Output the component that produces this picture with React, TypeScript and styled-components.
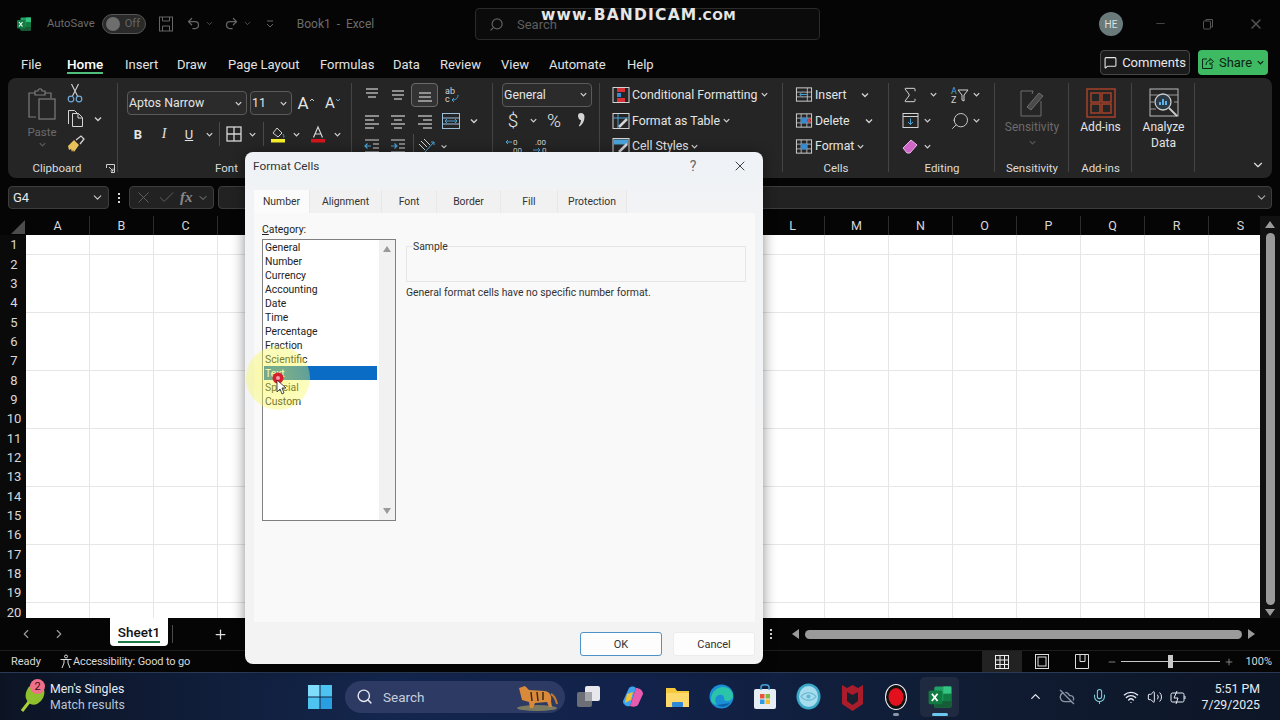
import React from "react";
import styled, { createGlobalStyle } from "styled-components";
import {
  Undo2, Redo2, Search, Sigma, ChevronDown, ChevronLeft, ChevronRight, ChevronUp,
  Plus, X, Check, MessageSquare, Mic, Wifi, Volume2, CloudOff, Minus,
} from "lucide-react";

const GlobalStyle = createGlobalStyle`
  html, body { margin: 0; padding: 0; background: #050505; }
  body { font-family: Roboto, "Liberation Sans", sans-serif; overflow: hidden; }
`;

const Page = styled.div`
  position: relative;
  width: 1280px;
  height: 720px;
  overflow: hidden;
  display: flex;
  flex-direction: column;
  background: #050505;
  color: #e8e8e8;
`;

/* title bar */
const TitleBar = styled.div`
  height: 47px;
  display: flex;
  align-items: center;
  padding-left: 16px;
  color: #6c6c6c;
`;
const Dim = styled.span<{ $ml?: number; $size?: number }>`
  margin-left: ${(p) => p.$ml ?? 0}px;
  font-size: ${(p) => p.$size ?? 12}px;
  color: #6c6c6c;
  white-space: nowrap;
`;
const Toggle = styled.div`
  margin-left: 7px;
  width: 44px;
  height: 20px;
  box-sizing: border-box;
  border: 1px solid #555;
  border-radius: 10px;
  background: #2a2a2a;
  display: flex;
  align-items: center;
  padding-left: 3px;
  gap: 5px;
  font-size: 11px;
  color: #666;
  &::before {
    content: "";
    width: 14px;
    height: 14px;
    border-radius: 50%;
    background: #6e6e6e;
  }
`;
const Slot = styled.span<{ $w: number; $ml?: number }>`
  flex: none;
  width: ${(p) => p.$w}px;
  margin-left: ${(p) => p.$ml ?? 0}px;
  display: inline-flex;
  align-items: center;
  justify-content: center;
`;
const SearchBox = styled.div`
  position: absolute;
  left: 475px;
  top: 8px;
  width: 345px;
  height: 32px;
  box-sizing: border-box;
  border: 1px solid #2b2b2b;
  border-radius: 4px;
  background: #0b0b0b;
  display: flex;
  align-items: center;
  padding-left: 13px;
  gap: 13px;
  font-size: 13px;
  color: #5e5e5e;
`;
const MirrorSearch = styled(Search)`
  transform: scaleX(-1);
`;
const Watermark = styled.div`
  position: absolute;
  left: 541px;
  top: 6px;
  font-family: "DejaVu Sans", sans-serif;
  font-weight: 700;
  font-size: 15.5px;
  letter-spacing: 1.2px;
  color: #e6e6e6;
  white-space: nowrap;
  small { font-size: 12.5px; letter-spacing: 0.4px; }
`;
const Avatar = styled.div`
  position: absolute;
  left: 1099px;
  top: 12px;
  width: 24px;
  height: 24px;
  border-radius: 50%;
  background: #6a7a7a;
  color: #d8e0e0;
  font-size: 10px;
  display: flex;
  align-items: center;
  justify-content: center;
`;
const WinButtons = styled.div`
  margin-left: auto;
  display: flex;
  align-items: center;
`;

/* menu row */
const MenuRow = styled.div`
  height: 31px;
  display: flex;
  align-items: center;
  font-size: 13px;
  color: #e2e2e2;
  padding-left: 21px;
`;
const MenuItem = styled.span<{ $w: number }>`
  flex: none;
  width: ${(p) => p.$w}px;
  margin-top: 3px;
  white-space: nowrap;
`;
const MenuText = styled.span<{ $active?: boolean }>`
  position: relative;
  display: inline-block;
  font-weight: ${(p) => (p.$active ? 500 : 400)};
  font-size: ${(p) => (p.$active ? 13.5 : 13)}px;
  color: ${(p) => (p.$active ? "#fff" : "#e2e2e2")};
  ${(p) =>
    p.$active &&
    `&::after {
      content: "";
      position: absolute;
      left: 0;
      right: 0;
      bottom: -2px;
      height: 2px;
      background: #4fc17a;
    }`}
`;
const CommentsBtn = styled.div`
  margin-left: auto;
  width: 90px;
  height: 25px;
  box-sizing: border-box;
  border: 1px solid #484848;
  border-radius: 4px;
  background: #1b1b1b;
  display: flex;
  align-items: center;
  justify-content: center;
  gap: 5px;
  color: #e8e8e8;
`;
const ShareBtn = styled.div`
  margin: 0 12px 0 8px;
  width: 70px;
  height: 25px;
  border-radius: 4px;
  background: #3dba62;
  color: #0d2414;
  display: flex;
  align-items: center;
  justify-content: center;
  gap: 4px;
`;

/* ribbon */
const Ribbon = styled.div`
  height: 100px;
  margin: 0 8px;
  border-radius: 8px;
  background: #252525;
  display: flex;
  color: #e4e4e4;
  font-size: 12.3px;
`;
const Group = styled.div<{ $w: number }>`
  position: relative;
  flex: none;
  width: ${(p) => p.$w}px;
  display: flex;
  flex-direction: column;
  &::after {
    content: "";
    position: absolute;
    right: 0;
    top: 5px;
    bottom: 6px;
    width: 1px;
    background: #444;
  }
`;
const GroupBody = styled.div<{ $pl?: number; $pt?: number; $gap?: number; $center?: boolean }>`
  height: 81px;
  box-sizing: border-box;
  padding: ${(p) => p.$pt ?? 4}px 0 0 ${(p) => p.$pl ?? 0}px;
  display: flex;
  flex-direction: column;
  gap: ${(p) => p.$gap ?? 0}px;
  ${(p) => p.$center && "align-items: center; text-align: center;"}
`;
const GroupLabel = styled.div<{ $shift?: number }>`
  height: 19px;
  line-height: 19px;
  text-align: center;
  font-size: 11.5px;
  color: #dcdcdc;
  padding-right: ${(p) => p.$shift ?? 0}px;
`;
const Launcher = styled.span`
  position: absolute;
  right: 3px;
  bottom: 5px;
  display: flex;
`;
const Row = styled.div<{ $h?: number }>`
  height: ${(p) => p.$h ?? 26}px;
  display: flex;
  align-items: center;
`;
const Select = styled.div<{ $w: number; $ml?: number }>`
  width: ${(p) => p.$w}px;
  margin-left: ${(p) => p.$ml ?? 0}px;
  height: 24px;
  box-sizing: border-box;
  border: 1px solid #5a5a5a;
  border-radius: 4px;
  background: #2b2b2b;
  padding: 0 3px 0 1px;
  display: flex;
  align-items: center;
  justify-content: space-between;
  font-size: 12.3px;
`;
const FontChar = styled.span<{ $size?: number; $weight?: number; $italic?: boolean; $under?: boolean; $serif?: boolean }>`
  font-size: ${(p) => p.$size ?? 13}px;
  font-weight: ${(p) => p.$weight ?? 400};
  font-style: ${(p) => (p.$italic ? "italic" : "normal")};
  text-decoration: ${(p) => (p.$under ? "underline" : "none")};
  font-family: ${(p) => (p.$serif ? '"Liberation Serif", serif' : "inherit")};
`;
const VBar = styled.span<{ $ml?: number; $h?: number }>`
  flex: none;
  width: 1px;
  height: ${(p) => p.$h ?? 24}px;
  margin-left: ${(p) => p.$ml ?? 0}px;
  background: #4a4a4a;
`;
const Active = styled(Slot)`
  height: 24px;
  box-sizing: border-box;
  border: 1px solid #6a6a6a;
  border-radius: 4px;
  background: #333;
`;
const Lbl = styled.span<{ $w?: number; $ml?: number }>`
  ${(p) => p.$w && `width: ${p.$w}px;`}
  margin-left: ${(p) => p.$ml ?? 2}px;
  white-space: nowrap;
`;
const BigIcon = styled.div`
  height: 32px;
  margin-top: 6px;
  display: flex;
  align-items: center;
  justify-content: center;
`;
const BigText = styled.div<{ $dim?: boolean }>`
  font-size: 12px;
  line-height: 16px;
  color: ${(p) => (p.$dim ? "#6b6b6b" : "#e4e4e4")};
`;
const Collapse = styled.div`
  margin: auto 7px 6px auto;
  display: flex;
`;

/* formula bar */
const FormulaRow = styled.div`
  height: 23px;
  margin: 8px 8px 0;
  display: flex;
  align-items: stretch;
`;
const NameBox = styled.div`
  width: 101px;
  box-sizing: border-box;
  border: 1px solid #3d3d3d;
  border-radius: 4px;
  background: #222;
  display: flex;
  align-items: center;
  justify-content: space-between;
  padding: 0 4px;
  font-size: 13px;
`;
const Dots = styled.div<{ $w: number }>`
  width: ${(p) => p.$w}px;
  display: flex;
  flex-direction: column;
  align-items: center;
  justify-content: center;
  gap: 2px;
  span {
    width: 2px;
    height: 2px;
    background: #d8d8d8;
  }
`;
const FxBox = styled.div`
  width: 85px;
  box-sizing: border-box;
  border: 1px solid #3d3d3d;
  border-radius: 4px;
  background: #222;
  display: flex;
  align-items: center;
  color: #888;
  padding-left: 4px;
  gap: 4px;
`;
const FormulaInput = styled.div`
  flex: 1;
  margin-left: 4px;
  box-sizing: border-box;
  border: 1px solid #3d3d3d;
  border-radius: 4px;
  background: #222;
  display: flex;
  align-items: center;
  justify-content: flex-end;
  padding-right: 3px;
`;

/* sheet */
const SheetArea = styled.div`
  margin-top: 7px;
  height: 402px;
  display: flex;
`;
const GridWrap = styled.div`
  width: 1260px;
  overflow: hidden;
`;
const COLS = "26px repeat(6, 64px) 95px repeat(12, 64px)";
const HeadRow = styled.div`
  height: 19px;
  display: grid;
  grid-template-columns: ${COLS};
`;
const ColHead = styled.div`
  border-right: 1px solid #2c2c2c;
  display: flex;
  align-items: center;
  justify-content: center;
  font-size: 12.5px;
  color: #d8d8d8;
`;
const Corner = styled.div`
  position: relative;
  &::after {
    content: "";
    position: absolute;
    right: 1px;
    bottom: 1px;
    border-style: solid;
    border-width: 0 0 14px 14px;
    border-color: transparent transparent #4c4c4c transparent;
  }
`;
const CellRow = styled.div`
  height: 19px;
  display: grid;
  grid-template-columns: ${COLS};
  &:nth-child(3n + 2) {
    height: 20px;
  }
`;
const RowHead = styled.div`
  background: #0a0a0a;
  color: #d8d8d8;
  font-size: 13px;
  text-align: center;
  padding-left: 2px;
  line-height: 20px;
`;
const Cell = styled.div`
  box-sizing: border-box;
  background: #fff;
  border-right: 1px solid #e6e6e6;
  border-bottom: 1px solid #e6e6e6;
`;
const VScroll = styled.div`
  width: 20px;
  height: 402px;
  display: flex;
  flex-direction: column;
  align-items: center;
  background: #111;
  padding: 5px 0 2px;
  box-sizing: border-box;
`;
const VThumb = styled.div`
  width: 9px;
  flex: 1;
  margin: 5px 0 4px;
  border-radius: 5px;
  background: #9a9a9a;
`;
const Triangle = styled.span<{ $dir: "up" | "down" | "left" | "right" }>`
  flex: none;
  width: 0;
  height: 0;
  border-style: solid;
  ${(p) =>
    ({
      up: "border-width: 0 5px 7px 5px; border-color: transparent transparent #9a9a9a;",
      down: "border-width: 7px 5px 0 5px; border-color: #9a9a9a transparent transparent;",
      left: "border-width: 5px 7px 5px 0; border-color: transparent #9a9a9a transparent transparent;",
      right: "border-width: 5px 0 5px 7px; border-color: transparent transparent transparent #9a9a9a;",
    })[p.$dir]}
`;

const TabsRow = styled.div`
  height: 32px;
  display: flex;
  align-items: center;
`;
const SheetTab = styled.div`
  align-self: flex-start;
  width: 58px;
  height: 28px;
  margin-left: 43px;
  box-sizing: border-box;
  border-radius: 0 0 4px 4px;
  background: #fff;
  color: #111;
  font-size: 13.5px;
  font-weight: 500;
  text-align: center;
  padding-top: 6px;
  position: relative;
  &::after {
    content: "";
    position: absolute;
    left: 8px;
    right: 8px;
    bottom: 3px;
    height: 2px;
    background: #1e7a45;
  }
`;
const HTrack = styled.div`
  margin-left: 13px;
  width: 469px;
  height: 26px;
  display: flex;
  align-items: center;
  gap: 6px;
  padding: 0 3px;
  box-sizing: border-box;
`;
const HThumb = styled.div`
  flex: 1;
  height: 9px;
  border-radius: 5px;
  background: #9a9a9a;
`;

/* status bar */
const StatusBar = styled.div`
  height: 22px;
  box-sizing: border-box;
  border-top: 1px solid #1d1d1d;
  display: flex;
  align-items: center;
  padding: 0 8px 0 11px;
  font-size: 11px;
  color: #d8d8d8;
  white-space: nowrap;
`;
const A11yText = styled.span`
  margin-left: -1px;
  letter-spacing: -0.15px;
`;
const StatusRight = styled.div`
  margin-left: auto;
  display: flex;
  align-items: center;
`;
const ZoomValue = styled.span`
  margin-left: 11px;
`;
const ViewCell = styled.div<{ $on?: boolean }>`
  width: 40px;
  height: 21px;
  display: flex;
  align-items: center;
  justify-content: center;
  background: ${(p) => (p.$on ? "#222" : "transparent")};
`;
const ZoomTrack = styled.div`
  position: relative;
  width: 99px;
  height: 1px;
  margin: 0 4px;
  background: #c8c8c8;
  &::after {
    content: "";
    position: absolute;
    left: 47px;
    top: -6px;
    width: 5px;
    height: 13px;
    background: #c8c8c8;
  }
`;

/* task bar */
const TaskBar = styled.div`
  height: 48px;
  border-top: 1px solid #2a3a55;
  box-sizing: border-box;
  background: linear-gradient(90deg, #0c1424 0%, #14264d 30%, #12224a 50%, #101c33 75%, #0d1626 100%);
  display: flex;
  align-items: center;
  color: #e8ecf4;
`;
const WidgetText = styled.div`
  margin-left: 2px;
  font-size: 12.3px;
  line-height: 16px;
  width: 255px;
  span { display: block; color: #b9c3d4; }
`;
const WidgetIcon = styled.div`
  position: relative;
  margin-left: 20px;
  width: 28px;
  height: 32px;
`;
const Badge = styled.span`
  position: absolute;
  left: 10px;
  top: -2px;
  width: 15px;
  height: 15px;
  border-radius: 50%;
  background: #f0708a;
  color: #3a0a14;
  font-size: 11px;
  text-align: center;
  line-height: 15px;
`;
const TaskSearch = styled.div`
  margin-left: 13px;
  width: 220px;
  height: 32px;
  box-sizing: border-box;
  border-radius: 16px;
  background: #2d3a63;
  display: flex;
  align-items: center;
  padding: 0 6px 0 11px;
  gap: 10px;
  font-size: 13.5px;
  color: #c6cede;
`;
const Tiger = styled.svg`
  margin-left: auto;
`;
const TaskSlot = styled.div<{ $w: number; $ml?: number; $on?: boolean; $dot?: string }>`
  position: relative;
  flex: none;
  width: ${(p) => p.$w}px;
  margin-left: ${(p) => p.$ml ?? 0}px;
  height: 40px;
  display: flex;
  align-items: center;
  justify-content: center;
  border-radius: 5px;
  background: ${(p) => (p.$on ? "#1f2a40" : "transparent")};
  ${(p) =>
    p.$dot &&
    `&::after {
      content: "";
      position: absolute;
      bottom: 1px;
      left: 50%;
      transform: translateX(-50%);
      width: ${p.$on ? 16 : 6}px;
      height: 3px;
      border-radius: 2px;
      background: ${p.$dot};
    }`}
`;
const Clock = styled.div`
  margin-left: auto;
  padding-right: 20px;
  text-align: right;
  font-size: 12.3px;
  line-height: 16px;
`;

/* dialog */
const Dialog = styled.div`
  position: absolute;
  left: 245px;
  top: 152px;
  width: 518px;
  height: 512px;
  box-sizing: border-box;
  border-radius: 8px;
  background: linear-gradient(180deg, #eef2f6 0, #f2f3f5 60px, #f3f3f3 100%);
  box-shadow: 0 2px 14px rgba(0, 0, 0, 0.45);
  color: #222;
  display: flex;
  flex-direction: column;
  font-size: 10.4px;
`;
const DlgHead = styled.div`
  height: 38px;
  flex: none;
  box-sizing: border-box;
  padding: 0 0 10px 8px;
  display: flex;
  align-items: center;
  font-size: 11.8px;
  color: #333;
`;
const Help = styled.span`
  margin-left: auto;
  font-size: 14px;
  color: #666;
  width: 20px;
  text-align: center;
`;
const DlgTabs = styled.div`
  height: 23px;
  flex: none;
  display: flex;
  padding-left: 9px;
`;
const DlgTab = styled.div<{ $w: number; $on?: boolean }>`
  width: ${(p) => p.$w}px;
  box-sizing: border-box;
  display: flex;
  align-items: center;
  justify-content: center;
  background: ${(p) => (p.$on ? "#fbfbfb" : "#f1f1f1")};
  border-right: 1px solid #e8e8e8;
  color: #333;
`;
const DlgPage = styled.div`
  height: 409px;
  flex: none;
  margin: 0 8px 0 9px;
  box-sizing: border-box;
  padding: 9px 9px 0 8px;
  background: #f9f9f9;
  display: grid;
  grid-template-columns: 134px 340px;
  column-gap: 10px;
`;
const Caption = styled.div`
  line-height: 14px;
  margin-bottom: 3px;
  padding-top: 1px;
  height: 13px;
  u { text-decoration: underline; text-underline-offset: 1px; }
`;
const ListBox = styled.div`
  height: 282px;
  box-sizing: border-box;
  border: 1px solid #808080;
  background: #fff;
  display: flex;
`;
const ListItems = styled.div`
  flex: 1;
  padding-left: 1px;
  margin-right: 2px;
`;
const ListItem = styled.div<{ $on?: boolean }>`
  height: 14px;
  line-height: 15px;
  padding-left: 1px;
  background: ${(p) => (p.$on ? "#0a6cc4" : "transparent")};
  color: ${(p) => (p.$on ? "#fff" : "#222")};
`;
const ListScroll = styled.div`
  width: 16px;
  background: #f1f1f1;
  display: flex;
  flex-direction: column;
  align-items: center;
  justify-content: space-between;
  padding: 6px 0;
  box-sizing: border-box;
`;
const Fieldset = styled.fieldset`
  margin: 17px 0 0;
  padding: 0;
  height: 43px;
  box-sizing: border-box;
  border: 1px solid #e6e6e6;
  legend {
    margin-left: 6px;
    padding: 0;
    line-height: 14px;
    color: #333;
    background: #f9f9f9;
    position: relative;
    top: 1px;
  }
`;
const Desc = styled.div`
  margin-top: 4px;
  line-height: 14px;
  color: #333;
  white-space: nowrap;
`;
const DlgFoot = styled.div`
  flex: 1;
  display: flex;
  justify-content: flex-end;
  gap: 11px;
  padding: 10px 8px 0 0;
`;
const DlgBtn = styled.div<{ $primary?: boolean }>`
  width: 82px;
  height: 24px;
  box-sizing: border-box;
  border: 1px solid ${(p) => (p.$primary ? "#4d93c9" : "#ececec")};
  border-radius: 3px;
  background: #fdfdfd;
  display: flex;
  align-items: center;
  justify-content: center;
  font-size: 11px;
  color: #333;
`;
const Highlight = styled.div`
  position: absolute;
  left: 1px;
  top: 194px;
  width: 64px;
  height: 64px;
  border-radius: 50%;
  background: radial-gradient(circle, rgba(248, 248, 70, 0.5) 0, rgba(248, 248, 80, 0.36) 70%, rgba(248, 248, 110, 0.08) 100%);
  pointer-events: none;
`;
const Pointer = styled.div`
  position: absolute;
  left: 27px;
  top: 220px;
  pointer-events: none;
`;
const ScrollTri = styled(Triangle)`
  border-width: ${(p) => (p.$dir === "up" ? "0 4px 6px 4px" : "6px 4px 0 4px")};
`;
const PasteCol = styled.div`
  display: flex;
  flex-direction: column;
  align-items: center;
`;
const PasteText = styled.span`
  margin-top: 3px;
  font-size: 11.5px;
  color: #6b6b6b;
  line-height: 16px;
`;

/* little drawings */
const GREY = "#d4d4d4";
const BLUE = "#4aa3d8";

const Chev = ({ c = "#d0d0d0", s = 10 }: { c?: string; s?: number }) => (
  <svg width={s} height={s} viewBox="0 0 10 10"><path d="M2 3.500 5 6.500 8 3.500" fill="none" stroke={c} strokeWidth="1.400" /></svg>
);

const Lines = ({ rows }: { rows: [number, number, number][] }) => (
  <svg width="18" height="16" viewBox="0 0 18 16">
    {rows.map(([a, b, y]) => <path key={y} d={`M${a} ${y}H${b}`} stroke={GREY} strokeWidth="1.200" />)}
  </svg>
);

const Indent = ({ flip }: { flip?: boolean }) => (
  <svg width="18" height="16" viewBox="0 0 18 16">
    <path d="M2 2h14M10 6h6M10 10h6M2 14h14" stroke={GREY} strokeWidth="1.200" />
    <path d={flip ? "M2 8h6M5.500 5.500 8 8l-2.500 2.500" : "M8 8H2M4.500 5.500 2 8l2.500 2.500"} stroke={BLUE} strokeWidth="1.200" fill="none" />
  </svg>
);

const GridIcon = ({ fill, cross }: { fill?: string; cross?: boolean }) => (
  <svg width="19" height="19" viewBox="0 0 19 19">
    <rect x="1.500" y="2.500" width="16" height="14" fill="none" stroke={GREY} />
    <path d="M1.500 7h16M1.500 12h16M6.500 2.500v14M12.500 2.500v14" stroke={GREY} strokeWidth=".8" />
    {fill && <rect x="6" y="6.500" width="7" height="6" fill={fill} />}
    {cross && <path d="M13 7.500l4 4m0-4-4 4" stroke="#e04a4a" strokeWidth="1.300" />}
  </svg>
);

const ExcelLogo = ({ s = 16 }: { s?: number }) => (
  <svg width={s} height={s} viewBox="0 0 32 32">
    <rect x="9" y="3" width="21" height="26" rx="2" fill="#21a366" />
    <rect x="20" y="3" width="10" height="9" fill="#33c481" />
    <rect x="20" y="12" width="10" height="9" fill="#107c41" />
    <rect x="9" y="21" width="21" height="8" fill="#185c37" />
    <rect x="2" y="8" width="17" height="17" rx="2" fill="#107c41" />
    <path d="M6 12l7 9m0-9-7 9" stroke="#fff" strokeWidth="2.200" />
  </svg>
);

const RestoreIcon = () => (
  <svg width="12" height="12" viewBox="0 0 12 12" fill="none" stroke="#555">
    <rect x="1.500" y="3" width="7" height="8" rx="1" /><path d="M4 3V1.500h6.500V9H8.500" />
  </svg>
);

const PasteIcon = () => (
  <PasteCol>
    <svg width="30" height="33" viewBox="0 0 30 33" fill="none" stroke="#7d7d7d" strokeWidth="1.200">
      <path d="M9 29H2V5h6M18 5h6v5" />
      <path d="M8 7V3h3c0-3 4-3 4 0h3v4z" />
      <rect x="12" y="11" width="16" height="20" />
    </svg>
    <PasteText>Paste</PasteText>
    <Chev c="#5a5a5a" s={9} />
  </PasteCol>
);

const columns = "ABCDEFGHIJKLMNOPQRS".split("");
const colHeads = ["A", "B", "C", "D", "E", "F", "", "", "", "", "", "L", "M", "N", "O", "P", "Q", "R", "S"];
const categories = ["General", "Number", "Currency", "Accounting", "Date", "Time", "Percentage", "Fraction", "Scientific", "Text", "Special", "Custom"];
const dlgTabs: [string, number][] = [["Number", 56], ["Alignment", 72], ["Font", 55], ["Border", 64], ["Fill", 57], ["Protection", 69]];
const menus: [string, number][] = [["File", 46], ["Home", 58], ["Insert", 52], ["Draw", 51], ["Page Layout", 92], ["Formulas", 73], ["Data", 47], ["Review", 61], ["View", 48], ["Automate", 78], ["Help", 40]];

const App = () => (
  <Page>
    <GlobalStyle />
    <TitleBar>
      <ExcelLogo />
      <Dim $ml={15} $size={11.3}>AutoSave</Dim>
      <Toggle>Off</Toggle>
      <Slot $w={14} $ml={13}>
        <svg width="14" height="16" viewBox="0 0 14 16" fill="none" stroke="#666"><rect x=".5" y="1" width="13" height="14" /><path d="M3.500 1v4h7V1M3.500 15v-5h7v5" /></svg>
      </Slot>
      <Slot $w={22} $ml={10}><Undo2 size={15} color="#666" /></Slot>
      <Slot $w={10}><ChevronDown size={9} color="#666" /></Slot>
      <Slot $w={22} $ml={6}><Redo2 size={15} color="#666" /></Slot>
      <Slot $w={10}><ChevronDown size={9} color="#666" /></Slot>
      <Slot $w={12} $ml={11}>
        <svg width="10" height="10" viewBox="0 0 10 10" fill="none" stroke="#666"><path d="M2 2h6M2 5l3 3 3-3" /></svg>
      </Slot>
      <Dim $ml={21}>Book1&nbsp; - &nbsp;Excel</Dim>
      <WinButtons>
        <Slot $w={48}><Minus size={13} color="#444" /></Slot>
        <Slot $w={48}><RestoreIcon /></Slot>
        <Slot $w={48}><X size={16} color="#555" /></Slot>
      </WinButtons>
    </TitleBar>
    <SearchBox>
      <MirrorSearch size={15} color="#5e5e5e" />
      Search
    </SearchBox>
    <Watermark>www.BANDICAM<small>.COM</small></Watermark>
    <Avatar>HE</Avatar>

    <MenuRow>
      {menus.map(([m, w]) => (
        <MenuItem key={m} $w={w}><MenuText $active={m === "Home"}>{m}</MenuText></MenuItem>
      ))}
      <CommentsBtn><MessageSquare size={13} color="#e8e8e8" />Comments</CommentsBtn>
      <ShareBtn>
        <svg width="14" height="14" viewBox="0 0 14 14" fill="none" stroke="#0d2414"><path d="M6 3H1.500v9.500H11V8M5 9c0-3 2-4.500 4-4.500V2.500l3.500 3L9 8.500V6.500" /></svg>
        Share<Chev c="#0d2414" s={9} />
      </ShareBtn>
    </MenuRow>

    <Ribbon>
      <Group $w={110}>
        <GroupBody $pt={0}>
          <Row $h={81}>
            <Slot $w={44} $ml={12}><PasteIcon /></Slot>
            <div>
              <Row>
                <Slot $w={22}>
                  <svg width="16" height="20" viewBox="0 0 16 20" fill="none"><path d="M5.500 13 11.500 1M10.500 13 4.500 1" stroke={GREY} strokeWidth="1.100" /><circle cx="4" cy="16" r="2.800" stroke="#6fa8d8" strokeWidth="1.200" /><circle cx="12" cy="16" r="2.800" stroke="#6fa8d8" strokeWidth="1.200" /></svg>
                </Slot>
              </Row>
              <Row>
                <Slot $w={22}>
                  <svg width="17" height="19" viewBox="0 0 17 19" fill="none" stroke={GREY}><path d="M1.500 15V1.500h6l3 3M5.500 4.500h6l4 4v9h-10zM11 4.500V9h4.500" /></svg>
                </Slot>
                <Slot $w={24}><Chev /></Slot>
              </Row>
              <Row>
                <Slot $w={22}>
                  <svg width="19" height="19" viewBox="0 0 19 19"><path d="M2 11l6-6 5 5-5 7-1-2-1 2-1-3-2 1z" fill="#e8c15a" /><path d="M10 5l5-4 3 3-4 5" fill="none" stroke={GREY} strokeWidth="1.300" /></svg>
                </Slot>
              </Row>
            </div>
          </Row>
        </GroupBody>
        <GroupLabel $shift={12}>Clipboard</GroupLabel>
        <Launcher>
          <svg width="9" height="9" viewBox="0 0 9 9" fill="none" stroke="#cfcfcf"><path d="M.5 4V.5h8v8H5M3 3l4 4M7 4.500V7H4.500" /></svg>
        </Launcher>
      </Group>

      <Group $w={234}>
        <GroupBody $pl={9} $pt={13} $gap={7}>
          <Row $h={24}>
            <Select $w={120}>Aptos Narrow<Chev s={9} /></Select>
            <Select $w={42} $ml={3}>11<Chev s={9} /></Select>
            <Slot $w={28}><FontChar $size={17}>A</FontChar><svg width="6" height="12" viewBox="0 0 6 12"><path d="M1 4l2-2 2 2" fill="none" stroke="#ccc" /></svg></Slot>
            <Slot $w={26}><FontChar $size={15}>A</FontChar><svg width="6" height="12" viewBox="0 0 6 12"><path d="M1 2l2 2 2-2" fill="none" stroke="#6aa9dc" /></svg></Slot>
          </Row>
          <Row $h={24}>
            <Slot $w={22}><FontChar $weight={700}>B</FontChar></Slot>
            <Slot $w={30}><FontChar $italic $serif $size={14}>I</FontChar></Slot>
            <Slot $w={20}><FontChar $under>U</FontChar></Slot>
            <Slot $w={20}><Chev s={9} /></Slot>
            <VBar />
            <Slot $w={27}>
              <svg width="16" height="16" viewBox="0 0 16 16" fill="none" stroke={GREY} strokeWidth="1.300"><rect x="1" y="1" width="14" height="14" /><path d="M8 1v14M1 8h14" /></svg>
            </Slot>
            <Slot $w={10}><Chev s={9} /></Slot>
            <VBar $ml={6} />
            <Slot $w={27}>
              <svg width="18" height="18" viewBox="0 0 18 18"><path d="M4 8l4-5 5 5-4 4z" fill="none" stroke={GREY} /><path d="M14 9c1 2 1.500 3 0 3.500" fill="none" stroke={BLUE} /><rect x="2" y="14" width="14" height="3.500" fill="#f5ee2a" /></svg>
            </Slot>
            <Slot $w={10}><Chev s={9} /></Slot>
            <Slot $w={28} $ml={3}>
              <svg width="18" height="18" viewBox="0 0 18 18"><path d="M4.500 12.500 9 2l4.500 10.500M6 9h6" fill="none" stroke={GREY} strokeWidth="1.200" /><rect x="2" y="14" width="14" height="3.500" fill="#d3151d" /></svg>
            </Slot>
            <Slot $w={10}><Chev s={9} /></Slot>
          </Row>
        </GroupBody>
        <GroupLabel $shift={17}>Font</GroupLabel>
      </Group>

      <Group $w={141}>
        <GroupBody $pl={7}>
          <Row>
            <Slot $w={26}><Lines rows={[[3, 15, 2], [3, 15, 6], [5, 13, 10]]} /></Slot>
            <Slot $w={26}><Lines rows={[[3, 15, 4], [3, 15, 8], [5, 13, 12]]} /></Slot>
            <Active $w={27}><Lines rows={[[3, 15, 6], [3, 15, 10], [2, 16, 14]]} /></Active>
            <Slot $w={26}>
              <svg width="18" height="18" viewBox="0 0 18 18"><text x="3" y="8" fontSize="9" fill={GREY} fontFamily="Roboto">ab</text><text x="3" y="16" fontSize="9" fill={GREY} fontFamily="Roboto">c</text><path d="M16 9c0 4-3 5-6 5m2-2-2 2 2 2" fill="none" stroke={BLUE} /></svg>
            </Slot>
          </Row>
          <Row>
            <Slot $w={26}><Lines rows={[[2, 16, 3], [2, 11, 7], [2, 16, 11], [2, 11, 15]]} /></Slot>
            <Slot $w={26}><Lines rows={[[2, 16, 3], [5, 13, 7], [2, 16, 11], [5, 13, 15]]} /></Slot>
            <Slot $w={27}><Lines rows={[[2, 16, 3], [7, 16, 7], [2, 16, 11], [7, 16, 15]]} /></Slot>
            <Slot $w={26}>
              <svg width="20" height="18" viewBox="0 0 20 18" fill="none"><rect x="1.500" y="1.500" width="17" height="15" stroke="#9cc0dc" /><path d="M1.500 6h17M1.500 12h17" stroke="#9cc0dc" /><path d="M4 9h12M6 7l-2 2 2 2M14 7l2 2-2 2" stroke={BLUE} /></svg>
            </Slot>
            <Slot $w={20}><Chev /></Slot>
          </Row>
          <Row>
            <Slot $w={26}><Indent /></Slot>
            <Slot $w={26}><Indent flip /></Slot>
            <VBar $ml={2} />
            <Slot $w={26}>
              <svg width="20" height="18" viewBox="0 0 20 18" fill="none"><path d="M4 4l6 6M2 7l6 6M7 2l6 6" stroke={GREY} /><path d="M8 15 17 5m-3 0h3v3" stroke={BLUE} /></svg>
            </Slot>
            <Slot $w={8}><Chev s={9} /></Slot>
          </Row>
        </GroupBody>
        <GroupLabel>Alignment</GroupLabel>
      </Group>

      <Group $w={107}>
        <GroupBody $pl={9}>
          <Row><Select $w={90}>General<Chev s={9} /></Select></Row>
          <Row>
            <Slot $w={22}><FontChar $size={19} $weight={300}>$</FontChar></Slot>
            <Slot $w={18}><Chev s={9} /></Slot>
            <Slot $w={24}><FontChar $size={19} $weight={300}>%</FontChar></Slot>
            <Slot $w={30}>
              <svg width="8" height="15" viewBox="0 0 8 15"><path d="M1 2.500C1 .8 2.500 0 4 0c2 0 3.500 1.500 3.500 4 0 4-2 7.500-5 9.500l-.6-.8C3 11 4 9 4 7 2.300 7 1 5 1 2.500z" fill={GREY} /></svg>
            </Slot>
          </Row>
          <Row>
            <Slot $w={22}>
              <svg width="18" height="16" viewBox="0 0 18 16"><path d="M8 4H2m2-2L2 4l2 2M3 9" fill="none" stroke={BLUE} /><text x="9" y="7" fontSize="8" fill={GREY} fontFamily="Roboto">0</text><text x="7" y="15" fontSize="8" fill={GREY} fontFamily="Roboto">.00</text></svg>
            </Slot>
            <Slot $w={32}>
              <svg width="18" height="16" viewBox="0 0 18 16"><text x="4" y="7" fontSize="8" fill={GREY} fontFamily="Roboto">.00</text><path d="M2 12h7m-2-2 2 2-2 2" fill="none" stroke={BLUE} /><text x="11" y="15" fontSize="8" fill={GREY} fontFamily="Roboto">0</text></svg>
            </Slot>
          </Row>
        </GroupBody>
        <GroupLabel>Number</GroupLabel>
      </Group>

      <Group $w={183}>
        <GroupBody $pl={12}>
          <Row>
            <Slot $w={18}>
              <svg width="18" height="18" viewBox="0 0 18 18"><rect x="1" y="1.500" width="16" height="15" fill="none" stroke={GREY} /><rect x="5" y="2" width="8" height="4" fill="#d8313a" /><rect x="5" y="12" width="8" height="4" fill="#d8313a" /><rect x="5" y="7" width="4" height="4" fill="#3a8ad0" /></svg>
            </Slot>
            <Lbl>Conditional Formatting</Lbl><Slot $w={12} $ml={1}><Chev s={9} /></Slot>
          </Row>
          <Row>
            <Slot $w={18}>
              <svg width="18" height="18" viewBox="0 0 18 18" fill="none"><rect x="1" y="1.500" width="16" height="15" stroke={GREY} /><path d="M1 6h16M6 2v14" stroke={BLUE} /><path d="M7 15 15 7" stroke={GREY} strokeWidth="2.500" /></svg>
            </Slot>
            <Lbl>Format as Table</Lbl><Slot $w={12}><Chev s={9} /></Slot>
          </Row>
          <Row>
            <Slot $w={18}>
              <svg width="18" height="18" viewBox="0 0 18 18" fill="none"><rect x="1" y="1.500" width="16" height="15" stroke={GREY} /><rect x="2" y="2.500" width="14" height="5" fill={BLUE} /><path d="M7 15 15 7" stroke={GREY} strokeWidth="2.500" /></svg>
            </Slot>
            <Lbl>Cell Styles</Lbl><Slot $w={12}><Chev s={9} /></Slot>
          </Row>
        </GroupBody>
        <GroupLabel>Styles</GroupLabel>
      </Group>

      <Group $w={106}>
        <GroupBody $pl={12}>
          <Row>
            <Slot $w={18}>
              <svg width="19" height="19" viewBox="0 0 19 19" fill="none"><rect x="1.500" y="2.500" width="16" height="14" stroke={GREY} /><path d="M1.500 7h16M1.500 12h16M13 2.500v14" stroke={GREY} strokeWidth=".8" /><path d="M14 9.500H5m3-3-3 3 3 3" stroke={BLUE} /></svg>
            </Slot>
            <Lbl $w={44}>Insert</Lbl><Slot $w={12}><Chev /></Slot>
          </Row>
          <Row>
            <Slot $w={18}><GridIcon fill="#3a8ad0" cross /></Slot>
            <Lbl $w={48}>Delete</Lbl><Slot $w={12}><Chev /></Slot>
          </Row>
          <Row>
            <Slot $w={18}><GridIcon fill="#3a8ad0" /></Slot>
            <Lbl $w={39}>Format</Lbl><Slot $w={12}><Chev s={9} /></Slot>
          </Row>
        </GroupBody>
        <GroupLabel>Cells</GroupLabel>
      </Group>

      <Group $w={106}>
        <GroupBody $pl={10}>
          <Row>
            <Slot $w={22}><Sigma size={20} color={GREY} strokeWidth={1.200} /></Slot>
            <Slot $w={24}><Chev s={9} /></Slot>
            <Slot $w={22} $ml={4}>
              <svg width="18" height="18" viewBox="0 0 18 18"><text x="0" y="8" fontSize="9" fill={BLUE} fontFamily="Roboto">A</text><text x="0" y="17" fontSize="9" fill={GREY} fontFamily="Roboto">Z</text><path d="M7 4h10l-4 5v6l-2-1V9z" fill="none" stroke={GREY} /></svg>
            </Slot>
            <Slot $w={10}><Chev s={9} /></Slot>
          </Row>
          <Row>
            <Slot $w={22}>
              <svg width="17" height="17" viewBox="0 0 17 17" fill="none"><rect x="1" y="1.500" width="15" height="14" stroke={GREY} /><path d="M1 4.500h15" stroke={GREY} /><path d="M8.500 6.500v6m-2.500-2.500 2.500 2.500L11 10" stroke={BLUE} /></svg>
            </Slot>
            <Slot $w={12}><Chev s={9} /></Slot>
            <Slot $w={22} $ml={16}><MirrorSearch size={20} color={GREY} strokeWidth={1.100} /></Slot>
            <Slot $w={10}><Chev s={9} /></Slot>
          </Row>
          <Row>
            <Slot $w={22}>
              <svg width="17" height="17" viewBox="0 0 17 17"><path d="M1 10 9 2l6 5-7 8H5z" fill="#d065c8" stroke="#e8b8e8" /></svg>
            </Slot>
            <Slot $w={12}><Chev s={9} /></Slot>
          </Row>
        </GroupBody>
        <GroupLabel>Editing</GroupLabel>
      </Group>

      <Group $w={74}>
        <GroupBody $center $pt={3}>
          <BigIcon>
            <svg width="30" height="32" viewBox="0 0 30 32" fill="none" stroke="#6e6e6e"><path d="M4 4h12l-1 3M4 4v25h20V14" /><path d="M10 20 22 6l4 3-12 14z" fill="#4a4a4a" /></svg>
          </BigIcon>
          <BigText $dim>Sensitivity</BigText>
          <BigText $dim><Chev c="#555" s={9} /></BigText>
        </GroupBody>
        <GroupLabel>Sensitivity</GroupLabel>
      </Group>

      <Group $w={63}>
        <GroupBody $center $pt={3}>
          <BigIcon>
            <svg width="30" height="30" viewBox="0 0 30 30" fill="none" stroke="#a5412a" strokeWidth="1.500"><rect x="1" y="1" width="28" height="28" /><rect x="5" y="5" width="9" height="9" /><rect x="16" y="5" width="9" height="9" /><rect x="5" y="16" width="9" height="9" /><rect x="16" y="16" width="9" height="9" /></svg>
          </BigIcon>
          <BigText>Add-ins</BigText>
        </GroupBody>
        <GroupLabel>Add-ins</GroupLabel>
      </Group>

      <Group $w={63}>
        <GroupBody $center $pt={3}>
          <BigIcon>
            <svg width="30" height="30" viewBox="0 0 30 30" fill="none"><rect x="1" y="1" width="28" height="27" stroke="#bbb" /><path d="M1 7h28M1 14h4M25 14h4M1 21h6" stroke="#999" /><circle cx="14" cy="14" r="8" fill="#2b3a44" stroke="#ccc" strokeWidth="1.300" /><path d="M11 17v-3M14 17v-6M17 17v-4" stroke="#5ab2e8" strokeWidth="2" /><path d="M20 20l8 8" stroke="#ccc" strokeWidth="1.800" /></svg>
          </BigIcon>
          <BigText>Analyze<br />Data</BigText>
        </GroupBody>
        <GroupLabel>&nbsp;</GroupLabel>
      </Group>
      <Collapse><ChevronDown size={14} color="#ddd" /></Collapse>
    </Ribbon>

    <FormulaRow>
      <NameBox>G4<ChevronDown size={13} color="#ccc" /></NameBox>
      <Dots $w={20}><span /><span /><span /></Dots>
      <FxBox>
        <X size={19} color="#666" strokeWidth={1.100} />
        <Check size={19} color="#666" strokeWidth={1.100} />
        <FontChar $italic $serif $size={15} $weight={700}>fx</FontChar>
        <ChevronDown size={12} color="#888" />
      </FxBox>
      <FormulaInput><ChevronDown size={13} color="#aaa" /></FormulaInput>
    </FormulaRow>

    <SheetArea>
      <GridWrap>
        <HeadRow>
          <Corner />
          {colHeads.map((c, i) => <ColHead key={i}>{c}</ColHead>)}
        </HeadRow>
        {Array.from({ length: 20 }, (_, r) => (
          <CellRow key={r}>
            <RowHead>{r + 1}</RowHead>
            {columns.map((c) => <Cell key={c} />)}
          </CellRow>
        ))}
      </GridWrap>
      <VScroll>
        <Triangle $dir="up" />
        <VThumb />
        <Triangle $dir="down" />
      </VScroll>
    </SheetArea>

    <TabsRow>
      <Slot $w={16} $ml={18}><ChevronLeft size={14} color="#9a9a9a" /></Slot>
      <Slot $w={16} $ml={17}><ChevronRight size={14} color="#9a9a9a" /></Slot>
      <SheetTab>Sheet1</SheetTab>
      <VBar $ml={4} $h={18} />
      <Slot $w={16} $ml={39}><Plus size={15} color="#ddd" /></Slot>
      <Slot $w={10} $ml={538}><Dots $w={10}><span /><span /><span /></Dots></Slot>
      <HTrack>
        <Triangle $dir="left" />
        <HThumb />
        <Triangle $dir="right" />
      </HTrack>
    </TabsRow>

    <StatusBar>
      Ready
      <Slot $w={16} $ml={17}>
        <svg width="15" height="15" viewBox="0 0 15 15" fill="none" stroke="#ddd"><circle cx="7" cy="2.500" r="1.500" /><path d="M1.500 5.500h11M5 6v3l-2 5M9 6v3l2 5" /></svg>
      </Slot>
      <A11yText>Accessibility: Good to go</A11yText>
      <StatusRight>
        <ViewCell $on>
          <svg width="14" height="14" viewBox="0 0 14 14" fill="none" stroke="#eee"><rect x=".5" y=".5" width="13" height="13" /><path d="M.5 5h13M.5 9.500h13M5 .5v13M9.500 .5v13" /></svg>
        </ViewCell>
        <ViewCell>
          <svg width="14" height="15" viewBox="0 0 14 15" fill="none" stroke="#ddd"><rect x=".5" y=".5" width="13" height="14" /><rect x="3" y="3" width="8" height="9" /></svg>
        </ViewCell>
        <ViewCell>
          <svg width="14" height="15" viewBox="0 0 14 15" fill="none" stroke="#ddd"><path d="M.5 .5h13v14H.5z" /><path d="M5 .5v7h5V.5" /></svg>
        </ViewCell>
        <Slot $w={10} $ml={5}><Minus size={10} color="#999" /></Slot>
        <ZoomTrack />
        <Slot $w={10}><Plus size={10} color="#999" /></Slot>
        <ZoomValue>100%</ZoomValue>
      </StatusRight>
    </StatusBar>

    <TaskBar>
      <WidgetIcon>
        <svg width="26" height="32" viewBox="0 0 26 32"><ellipse cx="15" cy="13" rx="9" ry="11" fill="#8ebf2e" transform="rotate(25 15 13)" /><path d="M9 21 2 30" stroke="#a8d038" strokeWidth="3" /></svg>
        <Badge>2</Badge>
      </WidgetIcon>
      <WidgetText>Men's Singles<span>Match results</span></WidgetText>
      <Slot $w={24} $ml={3}>
        <svg width="24" height="24" viewBox="0 0 24 24"><rect x="0" y="0" width="11.500" height="11.500" fill="#7fdcfa" /><rect x="12.500" y="0" width="11.500" height="11.500" fill="#4fc3f0" /><rect x="0" y="12.500" width="11.500" height="11.500" fill="#4fc3f0" /><rect x="12.500" y="12.500" width="11.500" height="11.500" fill="#2a9fe0" /></svg>
      </Slot>
      <TaskSearch>
        <Search size={17} color="#e4e8f0" />
        Search
        <Tiger width="46" height="30" viewBox="0 0 46 30">
          <ellipse cx="24" cy="26" rx="20" ry="3" fill="#7a7a60" />
          <path d="M6 6l6-2 4 4 16 1c5 1 7 5 6 10l1 6h-3l-2-5-12 1-2 5h-3l-1-6-7-2z" fill="#d88a3a" />
          <path d="M18 10l1 9M24 10l1 9M30 10v8" stroke="#3a2a18" strokeWidth="1.500" />
          <path d="M38 12c4 2 5 6 6 10" stroke="#c07a30" strokeWidth="2" fill="none" />
        </Tiger>
      </TaskSearch>
      <TaskSlot $w={44} $ml={2}>
        <svg width="26" height="26" viewBox="0 0 26 26"><rect x="1" y="8" width="15" height="15" rx="2" fill="#6d6f76" /><rect x="9" y="2" width="15" height="15" rx="2" fill="#e8e8ec" /><rect x="9" y="8" width="7" height="9" fill="#a5a6ac" /></svg>
      </TaskSlot>
      <TaskSlot $w={44}>
        <svg width="24" height="24" viewBox="0 0 24 24"><path d="M8 3c2-2 5-2 7 0l-6 18c-3 1-7-1-7-5z" fill="#3aa5f0" /><path d="M15 3c3 0 7 2 7 6l-5 11c-2 2-5 2-8 1z" fill="#e85cb0" /><path d="M6 9l6-2-2 8-6 3z" fill="#f2c03a" /></svg>
      </TaskSlot>
      <TaskSlot $w={44}>
        <svg width="25" height="24" viewBox="0 0 25 24"><path d="M1 3h9l2 3h12v16H1z" fill="#f6c93c" /><rect x="1" y="8" width="23" height="14" fill="#fcd96a" /><rect x="7" y="17" width="11" height="5" rx="1" fill="#2f87d8" /></svg>
      </TaskSlot>
      <TaskSlot $w={44}>
        <svg width="25" height="25" viewBox="0 0 25 25"><circle cx="12.500" cy="12.500" r="12" fill="#1b8fd6" /><path d="M2 16C2 8 8 3 14 3c6 0 10 4 10 9 0 3-3 5-6 5-2 0-3-1-3-3 0-3-3-4-5-3-4 1-5 6-2 10-4-1-6-3-6-5z" fill="#2bc4a8" /><path d="M8 21c3 2 9 3 13-2-4 1-9 1-13 2z" fill="#0e5fa8" /></svg>
      </TaskSlot>
      <TaskSlot $w={43}>
        <svg width="24" height="26" viewBox="0 0 24 26"><rect x="1" y="5" width="22" height="20" rx="2" fill="#e6eef4" /><path d="M8 6V3c0-3 8-3 8 0v3" fill="none" stroke="#4aa3d8" strokeWidth="1.500" /><rect x="7" y="10" width="4.500" height="4.500" fill="#e8543a" /><rect x="12.500" y="10" width="4.500" height="4.500" fill="#7fba3a" /><rect x="7" y="15.500" width="4.500" height="4.500" fill="#2f9ae0" /><rect x="12.500" y="15.500" width="4.500" height="4.500" fill="#f4bc2a" /></svg>
      </TaskSlot>
      <TaskSlot $w={44}>
        <svg width="25" height="27" viewBox="0 0 25 27"><ellipse cx="12.500" cy="13.500" rx="12" ry="13" fill="#3aa9c8" /><ellipse cx="12.500" cy="13.500" rx="9.500" ry="10.500" fill="#a6dcec" /><path d="M5 13.500c4-5 11-5 15 0-4 5-11 5-15 0z" fill="none" stroke="#5fb6d2" strokeWidth="1.200" /><circle cx="12.500" cy="13.500" r="2" fill="#5fb6d2" /></svg>
      </TaskSlot>
      <TaskSlot $w={44}>
        <svg width="23" height="28" viewBox="0 0 23 28"><path d="M1 2l5 3 5.500-3L17 5l5-3v19l-10.500 7L1 21z" fill="#a81c2c" /><path d="M6 9l5.500 3L17 9v9l-5.500 4L6 18z" fill="#19202f" /></svg>
      </TaskSlot>
      <TaskSlot $w={44} $dot="#8b95a5">
        <svg width="24" height="28" viewBox="0 0 24 28"><ellipse cx="12" cy="14" rx="11" ry="13" fill="#f4f4f4" /><ellipse cx="12" cy="14" rx="10" ry="12" fill="#111" /><ellipse cx="12" cy="14" rx="7.500" ry="9" fill="#e3101e" /></svg>
      </TaskSlot>
      <TaskSlot $w={39} $ml={2} $on $dot="#6cc8f0"><ExcelLogo s={26} /></TaskSlot>
      <Slot $w={20} $ml={66}><ChevronUp size={15} color="#e8ecf4" /></Slot>
      <Slot $w={20} $ml={12}><CloudOff size={16} color="#8b95a5" /></Slot>
      <Slot $w={20} $ml={12}><Mic size={17} color="#7fd0d8" strokeWidth={1.500} /></Slot>
      <Slot $w={20} $ml={12}><Wifi size={16} color="#e8ecf4" /></Slot>
      <Slot $w={20} $ml={4}><Volume2 size={16} color="#e8ecf4" strokeWidth={1.500} /></Slot>
      <Slot $w={20} $ml={4}>
        <svg width="18" height="16" viewBox="0 0 18 16" fill="none" stroke="#e8ecf4"><rect x="1" y="4" width="13" height="9" rx="1.500" /><path d="M15 7v3" /><path d="M7 2 4 9h4l-2 6" stroke="#e8ecf4" /></svg>
      </Slot>
      <Clock>5:51 PM<br />7/29/2025</Clock>
    </TaskBar>

    <Dialog>
      <DlgHead>
        Format Cells
        <Help>?</Help>
        <Slot $w={20} $ml={27}><X size={16} color="#333" strokeWidth={1.400} /></Slot>
        <Slot $w={13} />
      </DlgHead>
      <DlgTabs>
        {dlgTabs.map(([t, w], i) => <DlgTab key={t} $w={w} $on={i === 0}>{t}</DlgTab>)}
      </DlgTabs>
      <DlgPage>
        <div>
          <Caption><u>C</u>ategory:</Caption>
          <ListBox>
            <ListItems>
              {categories.map((c) => <ListItem key={c} $on={c === "Text"}>{c}</ListItem>)}
            </ListItems>
            <ListScroll>
              <ScrollTri $dir="up" />
              <ScrollTri $dir="down" />
            </ListScroll>
          </ListBox>
        </div>
        <div>
          <Fieldset><legend>Sample</legend></Fieldset>
          <Desc>General format cells have no specific number format.</Desc>
        </div>
      </DlgPage>
      <DlgFoot>
        <DlgBtn $primary>OK</DlgBtn>
        <DlgBtn>Cancel</DlgBtn>
      </DlgFoot>
      <Highlight />
      <Pointer>
        <svg width="16" height="24" viewBox="0 0 16 24">
          <circle cx="6" cy="6" r="5.500" fill="#d81f2e" />
          <circle cx="6" cy="6" r="2" fill="#f0a0a8" />
          <path d="M5 8v12l3-3 2 5 2-1-2-5h4z" fill="#fff" stroke="#222" strokeWidth=".8" />
        </svg>
      </Pointer>
    </Dialog>
  </Page>
);

export default App;
